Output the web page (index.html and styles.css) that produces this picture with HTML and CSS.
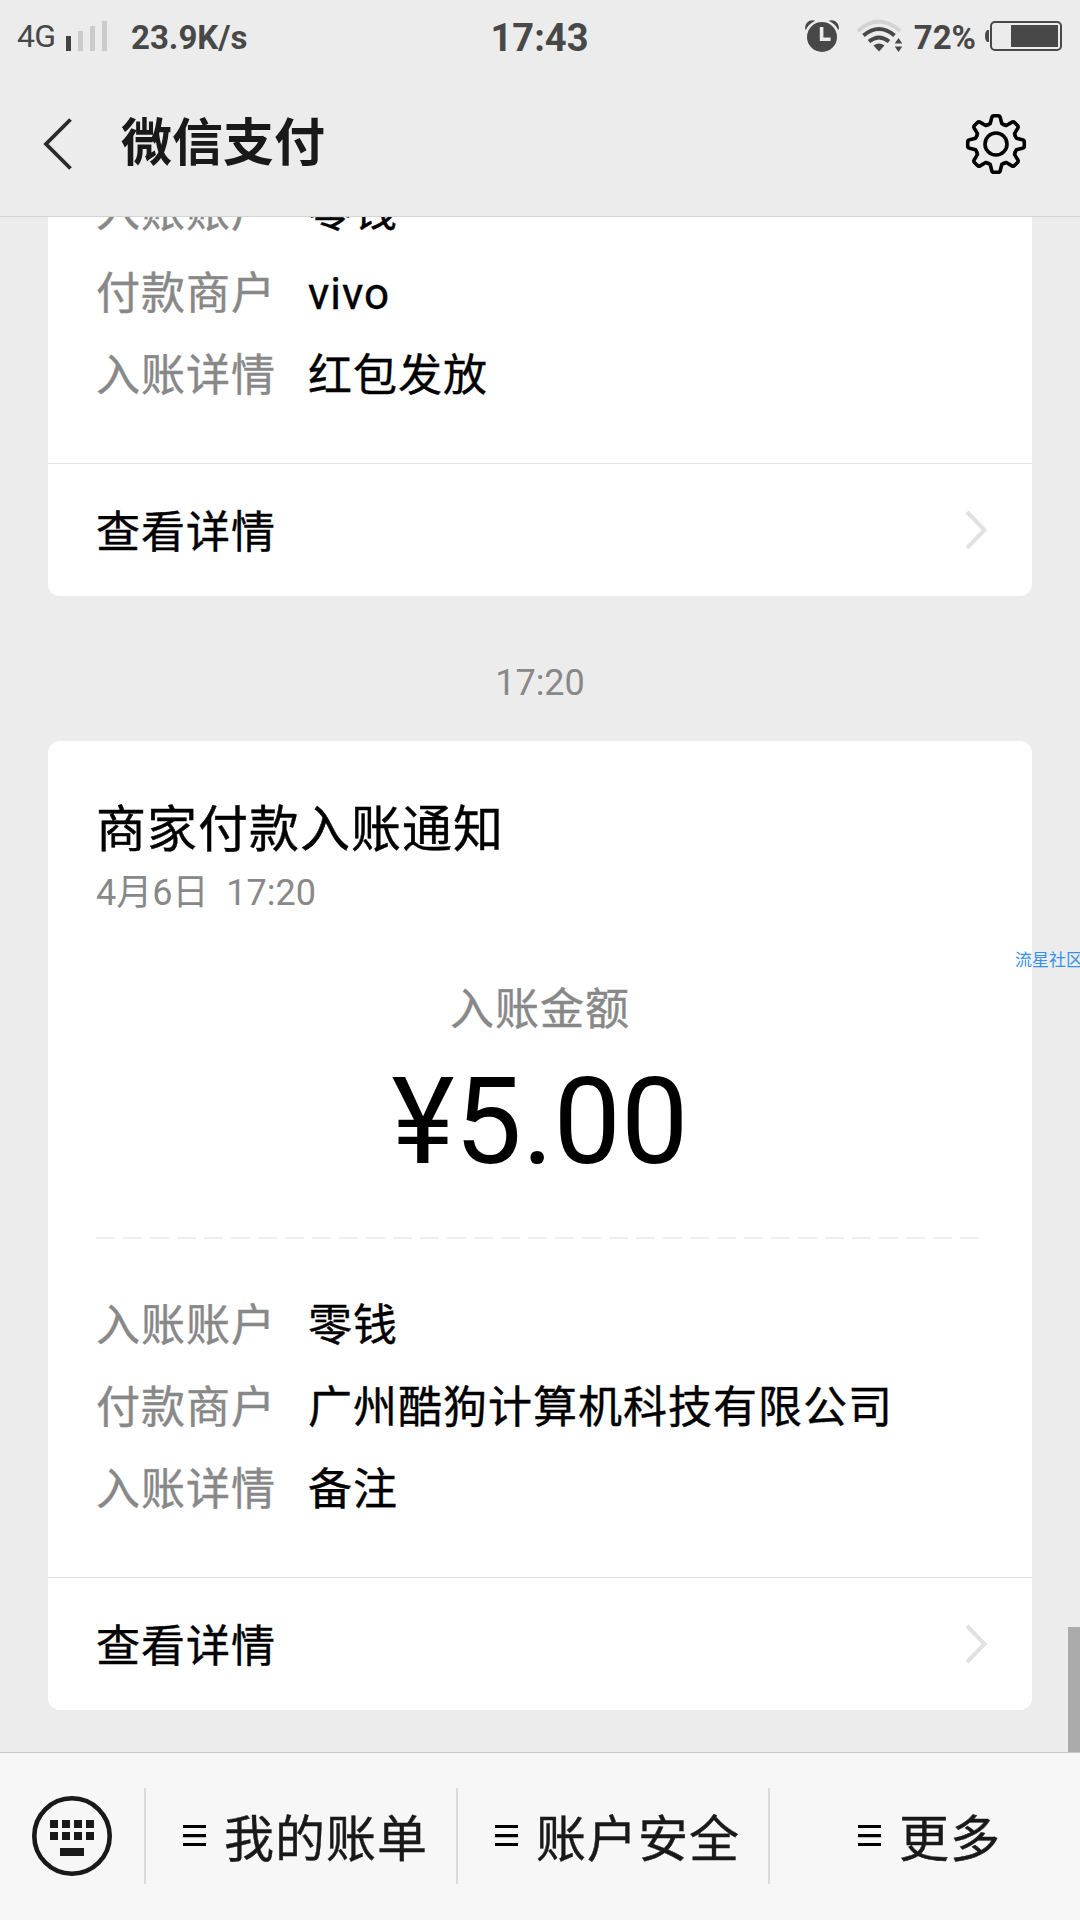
FILE: index.html
```
<!DOCTYPE html>
<html lang="zh-CN">
<head>
<meta charset="utf-8">
<title>微信支付</title>
<link rel="stylesheet" href="styles.css">
</head>
<body>
<div class="screen">
  <div class="status">
    <div class="status-left">
      <span class="network">4G</span>
      <svg class="signal" width="41" height="30" viewBox="0 0 41 30"><path fill="#434343" d="M0 15h5v15H0z"/><path fill="#cbcbcb" d="M12 10h5v20h-5zM24 5h5v25h-5zM36 0h5v30h-5z"/></svg>
      <span class="speed">23.9K/s</span>
    </div>
    <span class="clock">17:43</span>
    <div class="status-right">
      <svg class="alarm" width="36" height="36" viewBox="0 0 36 36">
        <g fill="#484848"><path d="M1.600 12.200C-.600 6 5.500 .200 11.300 2.800Q4.800 5.800 1.600 12.200zM34.400 12.200C36.600 6 30.500 .200 24.700 2.800Q31.200 5.800 34.400 12.200z"/><circle cx="18" cy="19" r="15"/></g>
        <path d="M17.600 9v12.300h9" fill="none" stroke="#ececec" stroke-width="3.600"/>
      </svg>
      <svg class="wifi" width="46" height="34" viewBox="0 0 46 34">
        <path d="M1 12Q22-7 43 12" fill="none" stroke="#d3d3d3" stroke-width="4"/>
        <g fill="none" stroke="#484848" stroke-width="4"><path d="M6.500 16.500Q22 3.500 37.500 16.500"/><path d="M12 22.500Q22 14.500 32 22.500"/></g>
        <path fill="#484848" d="M16.500 26.500Q22 22.500 27.500 26.500L22 32.500z"/>
        <path fill="#484848" d="M41.500 19l3.800 5.500h-7.600zM41.500 33l3.800-5.500h-7.600z"/>
      </svg>
      <span class="percent">72%</span>
      <svg class="battery" width="78" height="30" viewBox="0 0 78 30">
        <path fill="#484848" d="M5 9v12H3.500Q1 20 1 15t2.500-6z"/>
        <rect x="7" y="1" width="70" height="28" rx="4" fill="none" stroke="#484848" stroke-width="2"/>
        <path fill="#484848" d="M27 4h47v22H27z"/>
      </svg>
    </div>
  </div>
  <header class="header">
    <svg class="back" width="30" height="54" viewBox="0 0 30 54"><path d="M27.500 2.500L3 27l24.500 24.500" fill="none" stroke="#2a2a2a" stroke-width="3.800"/></svg>
    <h1 class="title">微信支付</h1>
    <svg class="gear" width="62" height="62" viewBox="-31 -31 62 62" fill="none" stroke="#000" stroke-width="3.600" stroke-linecap="round" stroke-linejoin="round">
      <circle r="11"/>
      <path id="tooth" d="M-8-19.300L-5.800-20.400-4.300-26.300Q-3.900-28.300-2.200-28.300H2.200Q3.900-28.300 4.300-26.300L5.800-20.400 8-19.300"/>
      <use href="#tooth" transform="rotate(45)"/><use href="#tooth" transform="rotate(90)"/><use href="#tooth" transform="rotate(135)"/><use href="#tooth" transform="rotate(180)"/><use href="#tooth" transform="rotate(225)"/><use href="#tooth" transform="rotate(270)"/><use href="#tooth" transform="rotate(315)"/>
    </svg>
  </header>
  <main class="feed">
    <section class="card">
      <dl class="rows">
        <div class="row"><dt>入账账户</dt><dd>零钱</dd></div>
        <div class="row"><dt>付款商户</dt><dd>vivo</dd></div>
        <div class="row"><dt>入账详情</dt><dd>红包发放</dd></div>
      </dl>
      <a class="more"><span>查看详情</span><svg width="24" height="42" viewBox="0 0 24 42"><path d="M3 3l17.500 18L3 39" fill="none" stroke="#e1e1e1" stroke-width="4"/></svg></a>
    </section>
    <time class="stamp">17:20</time>
    <section class="card">
      <div class="summary">
        <h2 class="card-title">商家付款入账通知</h2>
        <p class="date">4月6日&nbsp; 17:20</p>
        <p class="amount-label">入账金额</p>
        <p class="amount">¥5.00</p>
        <div class="dashes"></div>
      </div>
      <dl class="rows">
        <div class="row"><dt>入账账户</dt><dd>零钱</dd></div>
        <div class="row"><dt>付款商户</dt><dd>广州酷狗计算机科技有限公司</dd></div>
        <div class="row"><dt>入账详情</dt><dd>备注</dd></div>
      </dl>
      <a class="more"><span>查看详情</span><svg width="24" height="42" viewBox="0 0 24 42"><path d="M3 3l17.500 18L3 39" fill="none" stroke="#e1e1e1" stroke-width="4"/></svg></a>
    </section>
    <div class="scrollbar"></div>
    <span class="watermark">流星社区</span>
  </main>
  <nav class="menu">
    <div class="keyboard">
      <svg width="80" height="80" viewBox="0 0 80 80"><circle cx="40" cy="40" r="37.700" fill="none" stroke="#191919" stroke-width="4.600"/><path fill="#191919" d="M18 24h8v8h-8zM30 24h8v8h-8zM42 24h8v8h-8zM54 24h8v8h-8zM18 36h8v8h-8zM30 36h8v8h-8zM42 36h8v8h-8zM54 36h8v8h-8zM28 52h24v8H28z"/></svg>
    </div>
    <div class="item"><svg class="lines" width="23" height="22" viewBox="0 0 23 22"><path d="M0 0h23v3H0zM0 9h23v3H0zM0 18h23v3H0z"/><path fill="#bbb" d="M0 12h23v1H0z"/></svg><span class="label">我的账单</span></div>
    <div class="item"><svg class="lines" width="23" height="22" viewBox="0 0 23 22"><path d="M0 0h23v3H0zM0 9h23v3H0zM0 18h23v3H0z"/><path fill="#bbb" d="M0 12h23v1H0z"/></svg><span class="label">账户安全</span></div>
    <div class="item"><svg class="lines" width="23" height="22" viewBox="0 0 23 22"><path d="M0 0h23v3H0zM0 9h23v3H0zM0 18h23v3H0z"/><path fill="#bbb" d="M0 12h23v1H0z"/></svg><span class="label">更多</span></div>
  </nav>
</div>
</body>
</html>
```
FILE: styles.css
```
* { box-sizing: border-box; margin: 0; padding: 0; }
body { background: #ececec; }
svg { display: block; flex: none; }

.screen {
  width: 1080px;
  height: 1920px;
  display: flex;
  flex-direction: column;
  overflow: hidden;
  background: #ececec;
  color: #000;
  font-family: Roboto, "Noto Sans CJK SC", sans-serif;
  white-space: nowrap;
}

.status {
  height: 72px;
  flex: none;
  display: grid;
  grid-template-columns: 1fr auto 1fr;
  align-items: center;
  padding: 0 18px 0 17px;
  color: #484848;
}
.status-left, .status-right { display: flex; align-items: center; }
.status-right { justify-content: flex-end; }
.network { width: 49px; font-size: 32px; letter-spacing: -0.8px; padding-bottom: 1px; }
.signal { margin-right: 24px; }
.speed { font-size: 33px; font-weight: 700; padding-top: 2px; }
.clock { font-size: 38px; font-weight: 700; padding-top: 3px; }
.alarm { margin-right: 17px; }
.wifi { margin-right: 11px; }
.percent { font-size: 33px; font-weight: 700; padding-top: 2px; margin-right: 8px; }

.header {
  height: 145px;
  flex: none;
  display: flex;
  align-items: center;
  padding: 0 53px 0 43px;
  border-bottom: 1px solid #d4d4d4;
}
.title {
  flex: 1;
  margin-left: 48px;
  font-size: 51px;
  line-height: 72px;
  font-weight: 700;
  color: #191919;
}

.feed {
  position: relative;
  flex: 1;
  min-height: 0;
  display: flex;
  flex-direction: column;
  justify-content: flex-end;
  padding: 0 48px 42px;
  overflow: hidden;
}
.card { flex: none; background: #fff; border-radius: 12px; }
.rows { padding: 0 48px 46px; }
.row { display: flex; height: 82px; line-height: 82px; font-size: 44px; letter-spacing: 1px; }
.row dt { width: 212px; color: #888; }
.row, .more, .card-title, .amount-label, .label { -webkit-text-stroke-width: 0.4px; }
.more {
  height: 133px;
  display: flex;
  align-items: center;
  justify-content: space-between;
  padding: 0 44px 0 48px;
  border-top: 1px solid #e1e1e1;
  font-size: 44px;
  letter-spacing: 1px;
}
.more span { padding-bottom: 3px; }
.stamp {
  flex: none;
  height: 145px;
  line-height: 174px;
  text-align: center;
  font-size: 36px;
  color: #888;
}
.summary { padding: 53px 48px 46px; }
.card-title { font-size: 50px; letter-spacing: 1px; line-height: 72px; font-weight: 400; }
.date { margin-top: 3px; font-size: 36px; line-height: 48px; color: #888; }
.amount-label { margin-top: 61px; font-size: 44px; letter-spacing: 1px; line-height: 64px; text-align: center; color: #888; }
.amount { margin-top: 10px; font-size: 120px; line-height: 140px; text-align: center; }
.dashes {
  height: 2px;
  margin-top: 45px;
  background: repeating-linear-gradient(to right, #f0f0f0 0 19px, transparent 19px 27px);
}
.scrollbar {
  position: absolute;
  right: 0;
  bottom: 0;
  width: 12px;
  height: 125px;
  background: #ababab;
}
.watermark {
  position: absolute;
  left: 1015px;
  top: 731px;
  font-size: 17px;
  line-height: 24px;
  color: #3592e8;
}

.menu {
  height: 168px;
  flex: none;
  display: flex;
  align-items: center;
  padding-bottom: 1px;
  border-top: 1px solid #c8c8c8;
  background: #f7f7f7;
}
.keyboard { width: 144px; display: flex; justify-content: center; }
.item {
  width: 312px;
  height: 96px;
  display: flex;
  align-items: center;
  justify-content: center;
  padding-right: 3px;
  border-left: 2px solid #dcdcdc;
  font-size: 50px;
  letter-spacing: 1px;
  color: #191919;
}
.label { padding-bottom: 2px; }
.lines { margin: 0 18px 0 12px; }
```
